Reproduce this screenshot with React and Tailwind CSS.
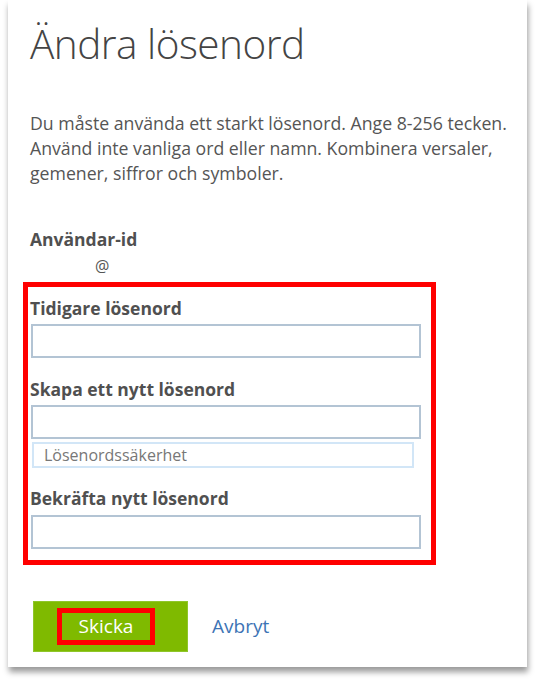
export default function App() {
  const font = { fontFamily: '"Open Sans", "Noto Sans", sans-serif' }
  return (
    <div className="w-[536px] h-[682px] bg-white overflow-hidden" style={font}>
      <div className="ml-[8px] w-[519px] h-[667px] bg-white shadow-[1px_5px_6px_rgba(0,0,0,0.4)] pl-[22px] pt-[14px]">
        <h1 className="text-[40.5px] leading-[60px] font-light text-[#444444] tracking-[-0.5px]">Ändra lösenord</h1>

        <p className="mt-[37px] text-[17.7px] leading-[25px] text-[#555555] whitespace-nowrap">
          Du måste använda ett starkt lösenord. Ange 8-256 tecken.<br />
          Använd inte vanliga ord eller namn. Kombinera versaler,<br />
          gemener, siffror och symboler.
        </p>

        <div className="mt-[42px] text-[17.5px] leading-[22px] font-bold text-[#505050]">Användar-id</div>
        <div className="mt-[5px] pl-[65px] text-[16px] leading-[22px] text-[#555555]">@</div>

        <div className="-ml-[7px] mt-[5px] w-[413px] h-[283px] border-[5px] border-[#ff0000] pl-[2px] pt-[10px]">
          <div className="text-[17.5px] leading-[22px] font-bold text-[#505050]">Tidigare lösenord</div>
          <div className="ml-[1px] mt-[5px] w-[390px] h-[34px] border-2 border-[#b3c4d4]"></div>

          <div className="mt-[20px] text-[17.5px] leading-[22px] font-bold text-[#505050]">Skapa ett nytt lösenord</div>
          <div className="ml-[1px] mt-[5px] w-[390px] h-[34px] border-2 border-[#b3c4d4]"></div>
          <div className="ml-[2px] mt-[3px] w-[382px] h-[26px] border-2 border-[#d2e6f7] pl-[10px] text-[16px] leading-[22px] text-[#777777]">Lösenordssäkerhet</div>

          <div className="mt-[19px] text-[17.5px] leading-[22px] font-bold text-[#505050]">Bekräfta nytt lösenord</div>
          <div className="ml-[1px] mt-[6px] w-[390px] h-[34px] border-2 border-[#b3c4d4]"></div>
        </div>

        <div className="mt-[36px] flex items-center">
          <div className="ml-[3px] w-[155px] h-[51px] bg-[#7fba00] border border-[#8fc62a] flex items-center pl-[23px]">
            <div className="w-[98px] h-[37px] border-[5px] border-[#ff0000] flex items-center justify-center text-[19px] text-white">Skicka</div>
          </div>
          <a className="ml-[24px] text-[19px] text-[#3d74b5]">Avbryt</a>
        </div>
      </div>
    </div>
  )
}
